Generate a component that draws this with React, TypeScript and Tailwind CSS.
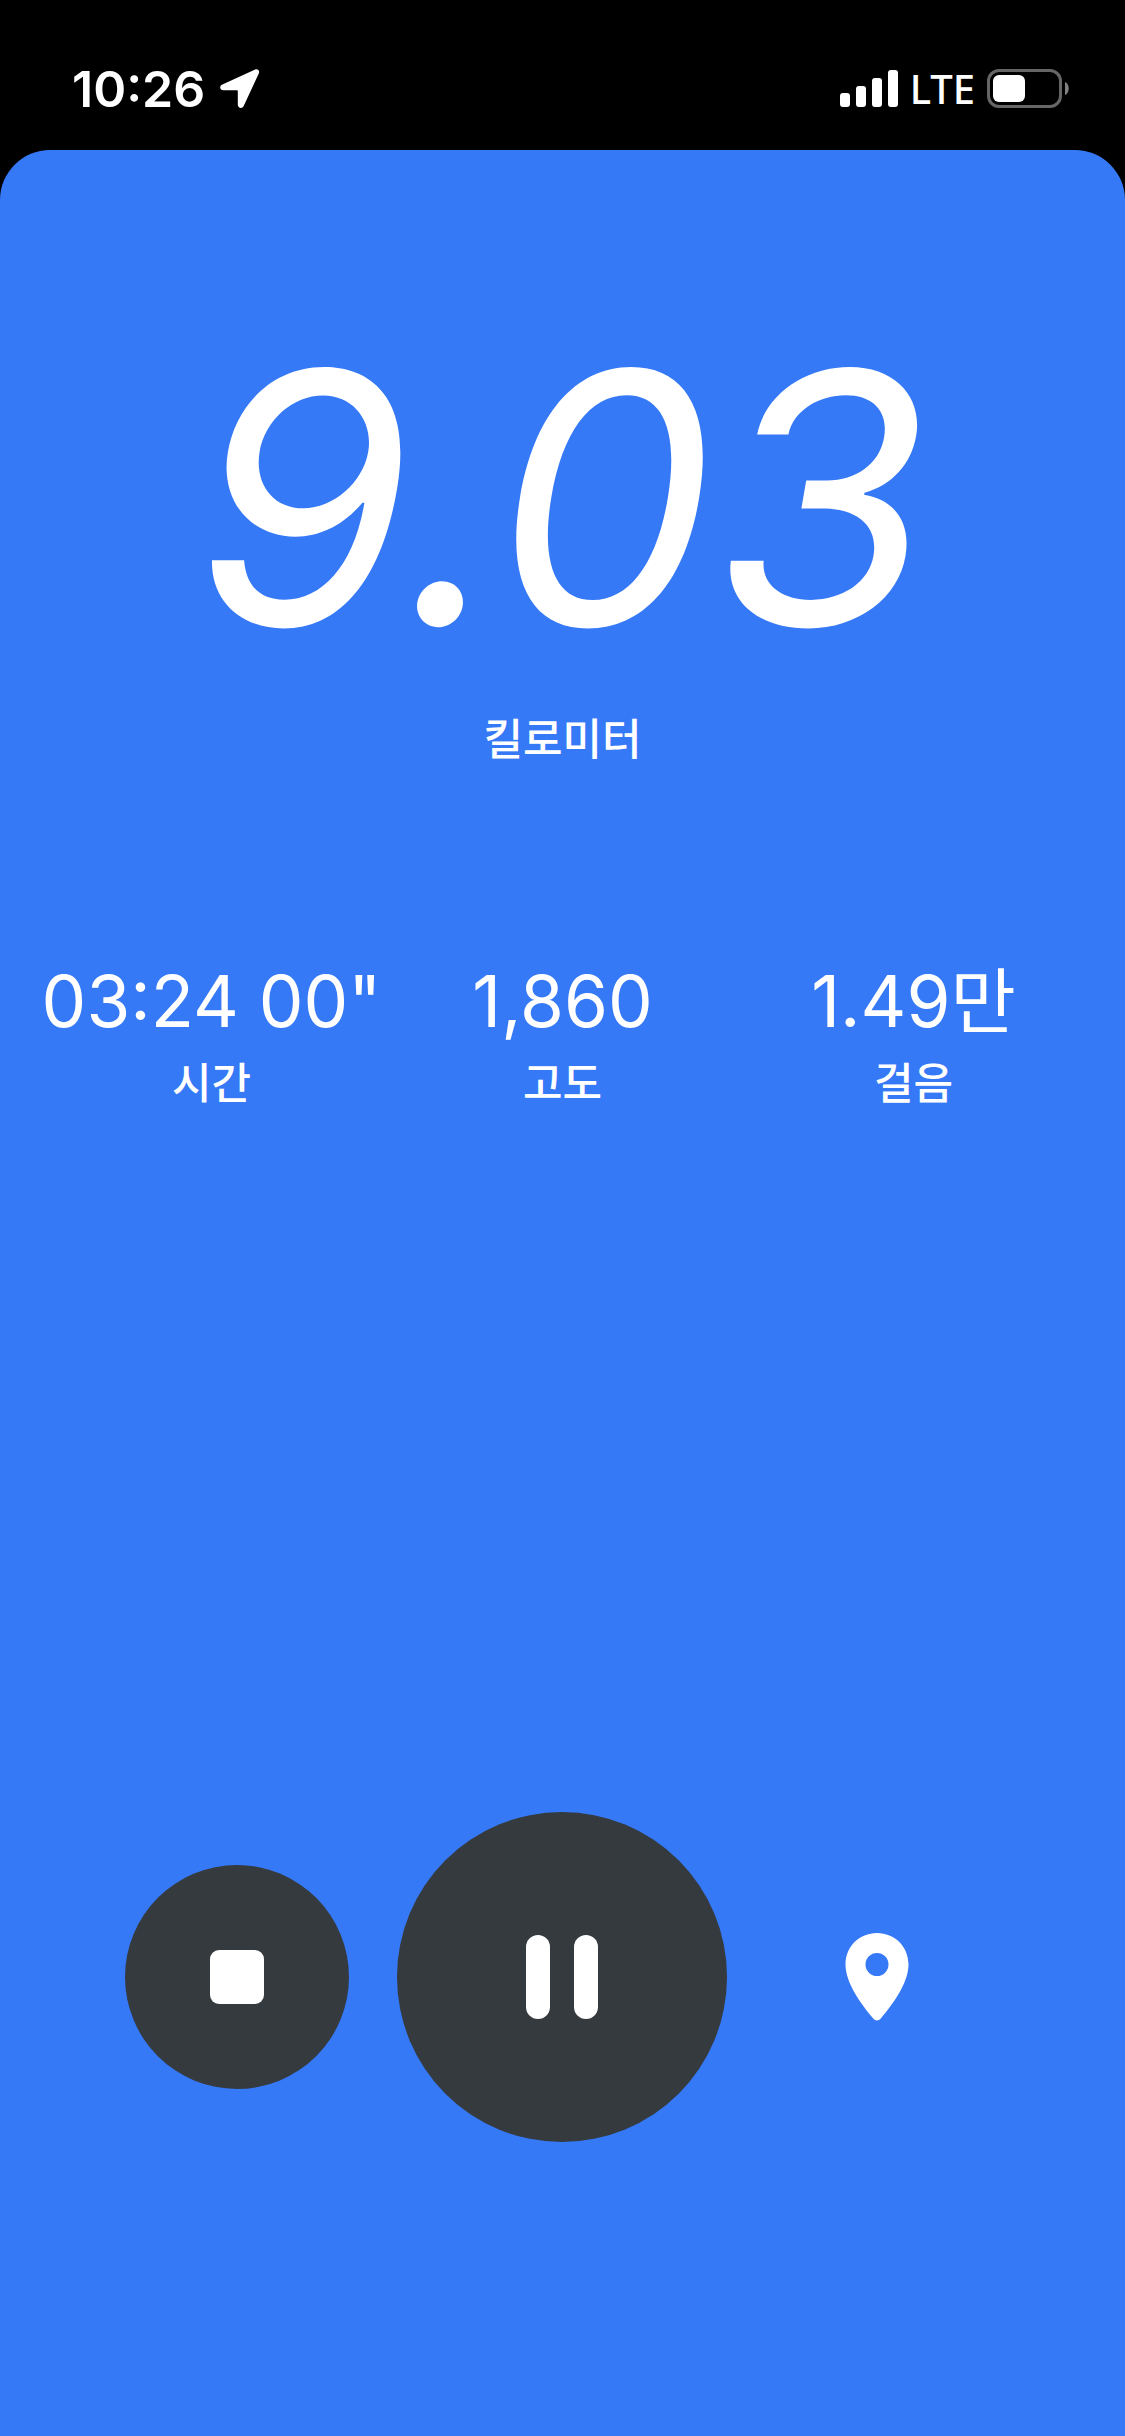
import { useState } from 'react'

const stats = [
  { label: '시간', value: '03:24 00"' },
  { label: '고도', value: '1,860' },
  { label: '걸음', value: '1.49만' },
]

function StatusBar() {
  return (
    <header className="flex h-[150px] items-center justify-between pt-7 pr-14 pl-[72px] text-white">
      <div className="flex items-center gap-[15px]">
        <span className="text-[50px] leading-none font-semibold">10:26</span>
        <svg className="h-10 w-10" viewBox="0 0 40 40" fill="currentColor" aria-hidden="true">
          <path d="M35.2 .6 2.4 15.6C-1.2 17.3-.2 21.3 3.6 21.3H17.2c.4 0 .6.2.6.6V35.6c0 3.9 4.4 4.7 6 1.2L38.9 4.2C39.9 1.8 37.7-.5 35.2.6Z" />
        </svg>
      </div>

      <div className="flex items-center gap-3">
        <svg className="h-[38px] w-[58px]" viewBox="0 0 58 38" fill="currentColor" aria-hidden="true">
          <rect x="0" y="23" width="10" height="14" rx="3" />
          <rect x="16" y="16" width="10" height="21" rx="3" />
          <rect x="32" y="8" width="10" height="29" rx="3" />
          <rect x="48" y="0" width="10" height="37" rx="3" />
        </svg>
        <span className="font-['Noto_Sans',sans-serif] text-[40px] leading-none font-medium">LTE</span>
        <svg className="h-10 w-[82px]" viewBox="0 0 82 40" fill="none" aria-hidden="true">
          <rect x="1.5" y="1.5" width="72" height="36" rx="10.5" stroke="#666666" strokeWidth="3" />
          <rect x="6" y="6" width="32" height="27" rx="6" fill="#ffffff" />
          <path d="M78 13v13c5-2 5-11 0-13Z" fill="#808080" />
        </svg>
      </div>
    </header>
  )
}

function Stat({ label, value }: { label: string; value: string }) {
  return (
    <div className="flex flex-col items-center">
      <dt className="order-last text-[43px] leading-[80px] font-medium">{label}</dt>
      <dd className="text-[71px] leading-[84px] whitespace-nowrap">{value}</dd>
    </div>
  )
}

function Controls() {
  const [paused, setPaused] = useState(false)

  return (
    <div className="mt-auto flex items-center gap-12 pl-[125px]">
      <button
        aria-label="정지"
        className="flex size-56 shrink-0 cursor-pointer items-center justify-center rounded-full bg-[#353a3e]"
      >
        <span className="size-[54px] rounded-[9px] bg-white" />
      </button>
      <button
        aria-label="일시정지"
        aria-pressed={paused}
        onClick={() => setPaused(!paused)}
        className="flex size-[330px] shrink-0 cursor-pointer items-center justify-center gap-6 rounded-full bg-[#353a3e]"
      >
        <span className="h-[84px] w-6 rounded-full bg-white" />
        <span className="h-[84px] w-6 rounded-full bg-white" />
      </button>
      <button
        aria-label="위치"
        className="flex h-56 w-[204px] shrink-0 cursor-pointer items-center justify-center"
      >
        <svg className="h-22 w-16" viewBox="0 0 64 88" fill="currentColor" aria-hidden="true">
          <path
            fillRule="evenodd"
            d="M32 0C14.3 0 .5 13.8.5 31.5.5 50 16.5 71.5 28.2 85.6c2.2 2.5 5.4 2.5 7.6 0C47.5 71.5 63.5 50 63.5 31.5 63.5 13.8 49.7 0 32 0Zm0 20a11.5 11.5 0 1 1 0 23 11.5 11.5 0 0 1 0-23Z"
          />
        </svg>
      </button>
    </div>
  )
}

export default function App() {
  return (
    <div className="flex min-h-screen flex-col bg-black font-[Inter,'Noto_Sans_CJK_KR',sans-serif]">
      <StatusBar />
      <main className="flex flex-1 flex-col rounded-t-[50px] bg-[#3579f7] pt-[136px] pb-[294px] text-white">
        <section className="flex flex-col items-center">
          <p className="text-[350px] leading-[424px] italic">9.03</p>
          <p className="text-[43px] leading-[58px] font-medium">킬로미터</p>
        </section>
        <dl className="mt-[191px] grid grid-cols-3 px-9">
          {stats.map((stat) => (
            <Stat key={stat.label} label={stat.label} value={stat.value} />
          ))}
        </dl>
        <Controls />
      </main>
    </div>
  )
}
